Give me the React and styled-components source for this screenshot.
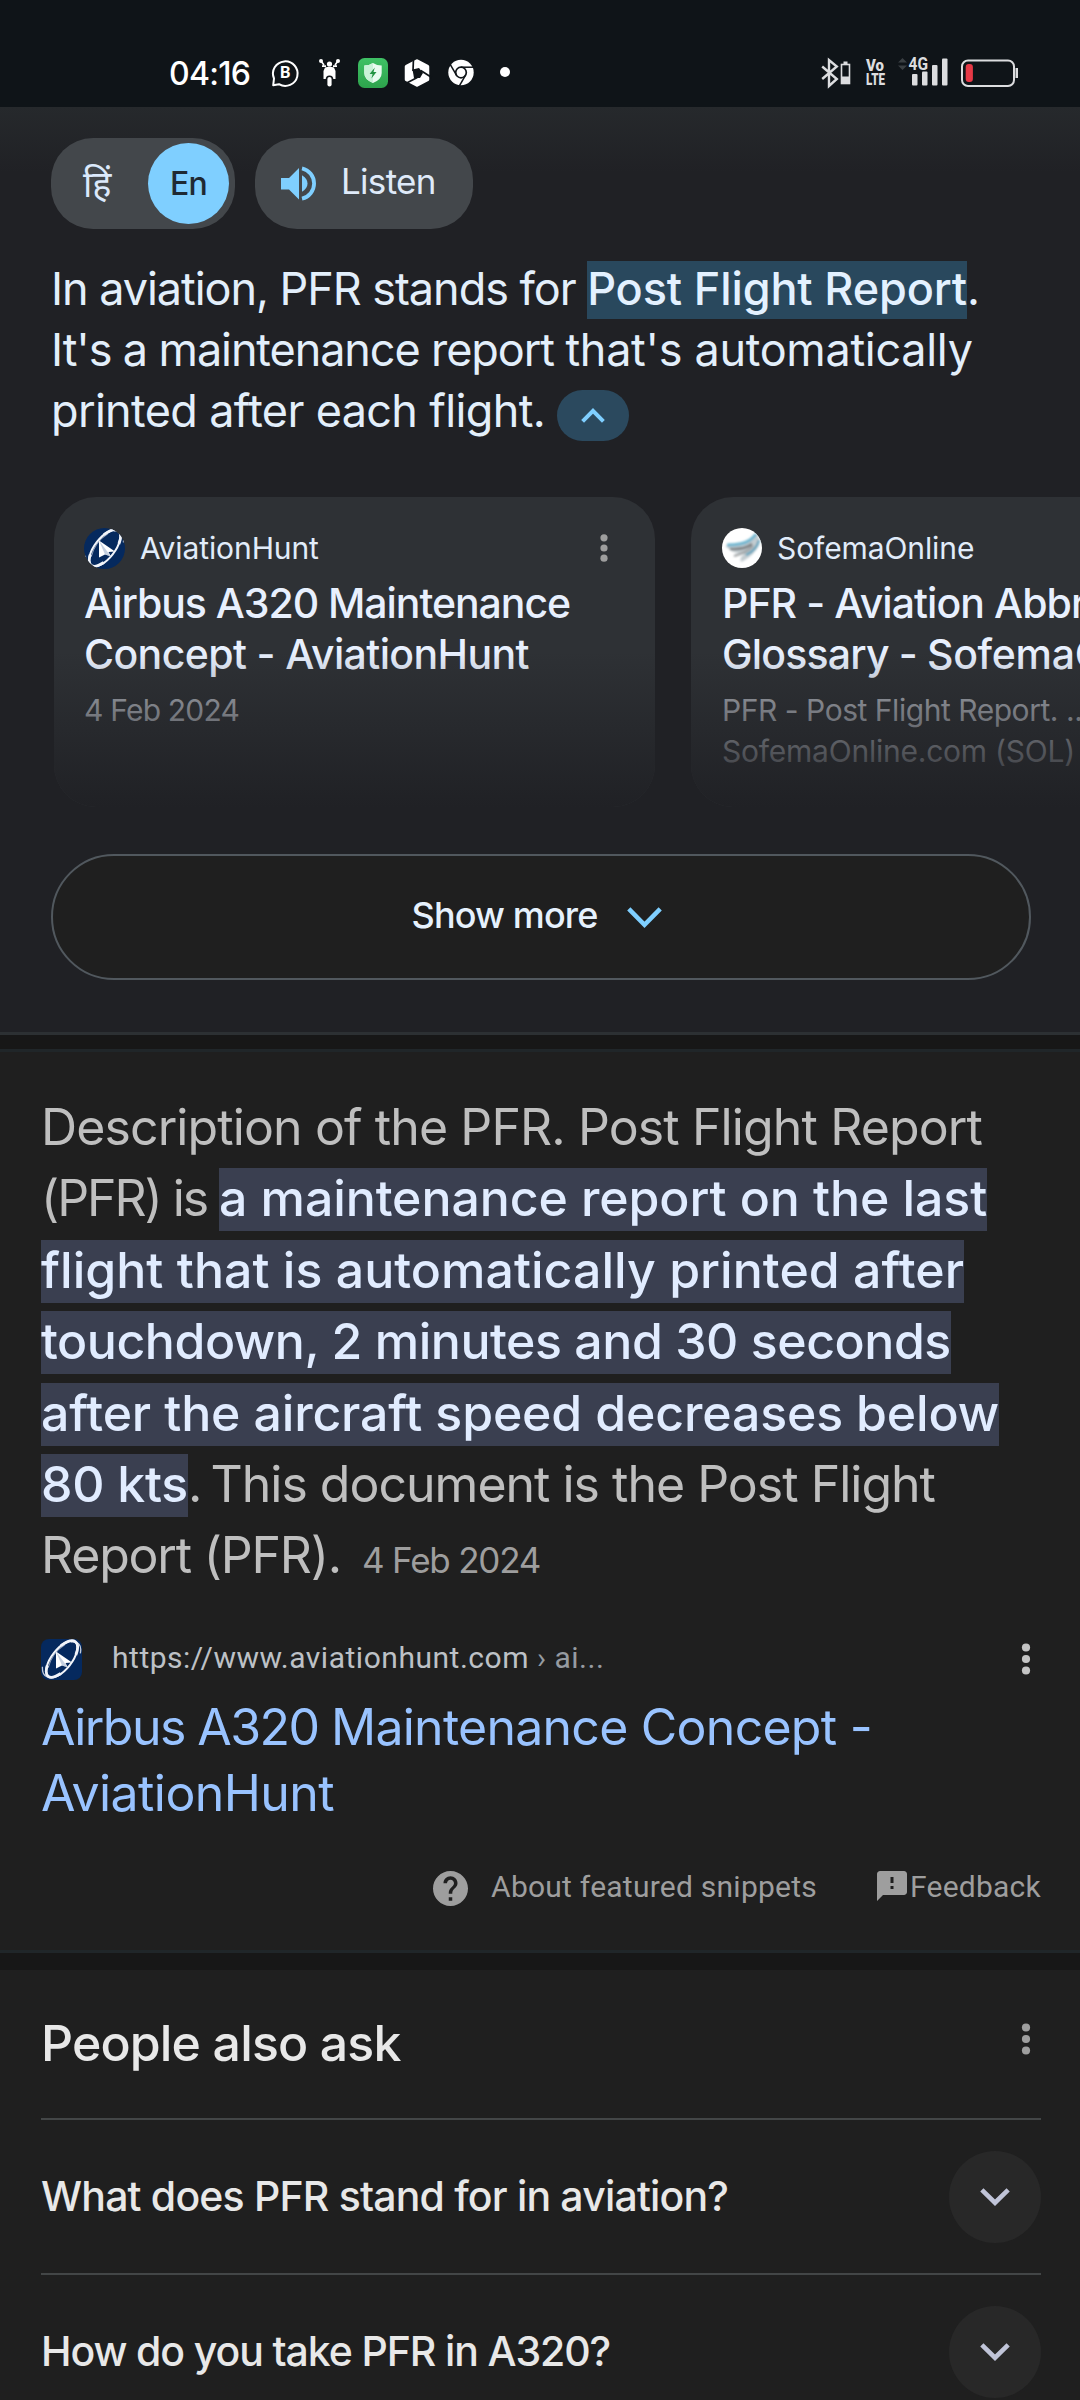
import React from "react";
import styled, { createGlobalStyle } from "styled-components";

const GlobalStyle = createGlobalStyle`
  *, *::before, *::after { box-sizing: border-box; }
  body { margin: 0; background: #1f1f1f; font-family: Inter, "Noto Sans", sans-serif; }
`;

const Screen = styled.div`
  width: 1080px;
  height: 2400px;
  overflow: hidden;
  display: flex;
  flex-direction: column;
  background: #171717;
`;

/* ---------- status bar ---------- */
const StatusBar = styled.header`
  flex: none;
  height: 107px;
  padding: 39px 62px 0 169px;
  display: flex;
  align-items: center;
  background: #0f1418;
`;
const Clock = styled.span`
  width: 82px;
  font-size: 32px;
  font-weight: 500;
  letter-spacing: -0.7px;
  color: #fff;
  white-space: nowrap;
`;
const StatusIcon = styled.svg`
  flex: none;
  display: block;
  overflow: visible;
  height: 30px;
  width: ${(p) => p.$w}px;
  margin-left: ${(p) => p.$gap}px;
`;
const StatusGroup = styled.div`
  display: flex;
  margin-left: auto;
`;

/* ---------- overview ---------- */
const Overview = styled.section`
  flex: none;
  height: 928px;
  padding: 31px 0 0 51px;
  border-bottom: 3px solid #2c3033;
  background: linear-gradient(#26292c 0, #202125 65px, #202125 100%);
`;
const ChipRow = styled.div`
  display: flex;
  gap: 20px;
`;
const Chip = styled.div`
  height: 91px;
  width: ${(p) => p.$w}px;
  padding: ${(p) => p.$pad};
  border-radius: 42px;
  background: #43474b;
  display: flex;
  align-items: center;
`;
const Hindi = styled.span`
  width: 29px;
  font-family: "Noto Sans", sans-serif;
  font-size: 36px;
  line-height: 50px;
  color: #dbe9fb;
  white-space: nowrap;
`;
const Selected = styled.span`
  margin-left: auto;
  width: 81px;
  height: 81px;
  border-radius: 50%;
  background: #7fcfff;
  color: #1f2a33;
  display: flex;
  align-items: center;
  justify-content: center;
  padding-bottom: 1px;
  font-size: 32px;
  font-weight: 500;
  letter-spacing: -0.8px;
`;
const ListenLabel = styled.span`
  margin-left: 25px;
  padding-bottom: 5px;
  font-size: 35px;
  letter-spacing: -0.7px;
  color: #dfeaf9;
`;
const Answer = styled.p`
  margin: 29px 0 0;
  font-size: 45px;
  line-height: 61px;
  color: #e3effb;
`;
const Line = styled.span`
  display: block;
  white-space: pre;
  height: ${(p) => p.$h};
  letter-spacing: ${(p) => p.$ls || 0}px;
`;
const Mark = styled.mark`
  padding-bottom: 3px;
  font-weight: 500;
  letter-spacing: ${(p) => p.$ls || 0}px;
  color: ${(p) => p.$fg};
  background: ${(p) => p.$bg};
`;
const Collapse = styled.span`
  display: inline-flex;
  align-items: center;
  justify-content: center;
  width: 72px;
  height: 51px;
  margin-left: 12px;
  border-radius: 26px;
  vertical-align: 4px;
  background: #2b495e;
`;
const Cards = styled.div`
  margin: 56px 0 0 3px;
  display: flex;
  gap: 36px;
  overflow: hidden;
`;
const Card = styled.article`
  position: relative;
  flex: none;
  width: ${(p) => p.$w}px;
  height: 310px;
  padding: 31px 0 0 ${(p) => p.$pl}px;
  border-radius: ${(p) => p.$r};
  overflow: hidden;
  background: #2e3135;
`;
const Fade = styled.div`
  position: absolute;
  inset: 155px 0 0 0;
  background: linear-gradient(rgba(32, 33, 37, 0), #202125);
`;
const CardHead = styled.div`
  height: 40px;
  padding-right: 45px;
  display: flex;
  align-items: center;
`;
const Source = styled.span`
  margin-left: 15px;
  padding-bottom: 1px;
  font-size: 30px;
  letter-spacing: -0.1px;
  color: #e1ecfa;
`;
const CardTitle = styled.h3`
  margin: 10px 0 0;
  font-size: 41px;
  line-height: 51px;
  font-weight: 500;
  color: #e8f0fe;
`;
const CardText = styled.p`
  margin: 10px 0 0;
  font-size: 30px;
  line-height: 41px;
  color: #b0b4bc;
`;
const Word = styled.span`
  letter-spacing: ${(p) => p.$ls}px;
`;
const Push = styled.span`
  margin-left: auto;
  display: flex;
`;
const ShowMore = styled.button`
  display: flex;
  align-items: center;
  justify-content: center;
  width: 980px;
  height: 126px;
  margin: 47px 0 0;
  padding: 0 8px 5px 0;
  border: 2px solid #51585e;
  border-radius: 63px;
  background: #1f1f1f;
  font-family: inherit;
  font-size: 36px;
  font-weight: 500;
  letter-spacing: -0.85px;
  color: #e6f1fd;
  gap: 30px;
`;

/* ---------- featured snippet ---------- */
const Snippet = styled.section`
  flex: none;
  height: 904px;
  margin-top: 14px;
  padding: 40px 39px 0 41px;
  border-top: 3px solid #202629;
  border-bottom: 3px solid #202629;
  background: #1f1f1f;
`;
const Description = styled.p`
  margin: 0;
  font-size: 50px;
  line-height: 71.4px;
  color: #bfbfbf;
`;
const DateText = styled.span`
  margin-left: 21px;
  font-size: 35px;
  line-height: 1;
  letter-spacing: -1.2px;
  color: #9e9e9e;
`;
const UrlRow = styled.div`
  height: 41px;
  margin-top: 47px;
  padding-right: 9px;
  display: flex;
  align-items: center;
`;
const Url = styled.span`
  margin-left: 30px;
  padding-bottom: 3px;
  font-family: Roboto, sans-serif;
  font-size: 30px;
  letter-spacing: 0.52px;
  white-space: pre;
  color: #bdc1c6;
`;
const Crumb = styled.span`
  color: #969ba1;
`;
const ResultTitle = styled.h2`
  margin: 14px 0 0;
  font-size: 50px;
  line-height: 66px;
  font-weight: 400;
  color: #99c3ff;
`;
const Footer = styled.div`
  height: 37px;
  margin-top: 42px;
  display: flex;
  align-items: center;
  justify-content: flex-end;
  font-family: Roboto, sans-serif;
  font-size: 30px;
  letter-spacing: 0.24px;
  color: #9e9e9e;
`;
const FooterLink = styled.span`
  display: flex;
  align-items: center;
  gap: ${(p) => p.$gap}px;
  margin-left: ${(p) => p.$ml || 0}px;
`;
const Nudge = styled.span`
  display: flex;
  padding-top: ${(p) => p.$top || 0}px;
  padding-bottom: ${(p) => p.$bottom || 0}px;
`;

/* ---------- people also ask ---------- */
const Ask = styled.section`
  flex: none;
  height: 460px;
  margin-top: 17px;
  padding: 43px 39px 0 41px;
  background: #1f1f1f;
`;
const AskHead = styled.div`
  display: flex;
  align-items: center;
  height: 60px;
  margin-bottom: 45px;
  padding-right: 9px;
`;
const AskTitle = styled.h2`
  margin: 0;
  font-size: 50px;
  line-height: 60px;
  font-weight: 500;
  letter-spacing: -0.85px;
  color: #e8e8e8;
`;
const Question = styled.div`
  display: flex;
  align-items: center;
  justify-content: space-between;
  height: 155px;
  border-top: 2px solid #434647;
  font-size: 41px;
  font-weight: 500;
  letter-spacing: ${(p) => p.$ls}px;
  color: #e8e8e8;
`;
const QuestionText = styled.span`
  padding-bottom: 2px;
`;
const Expand = styled.span`
  width: 92px;
  height: 92px;
  border-radius: 50%;
  background: #282828;
  display: flex;
  align-items: center;
  justify-content: center;
`;

const Dots = ({ color, step = 11.5, r = 4.1 }) => (
  <svg width="12" height="34" viewBox="-6 -17 12 34">
    {[-step, 0, step].map((y) => <circle key={y} cy={y} r={r} fill={color} />)}
  </svg>
);

const Chevron = ({ w, h, color, up, sw }) => (
  <svg width={w} height={h} viewBox={`0 0 ${w} ${h}`}>
    <path
      d={up
        ? `M${sw * 0.4} ${h - sw * 0.4}L${w / 2} ${sw * 0.72}L${w - sw * 0.4} ${h - sw * 0.4}`
        : `M${sw * 0.4} ${sw * 0.4}L${w / 2} ${h - sw * 0.72}L${w - sw * 0.4} ${sw * 0.4}`}
      fill="none" stroke={color} strokeWidth={sw}
    />
  </svg>
);

const HuntLogo = ({ round }) => (
  <svg width="41" height="41" viewBox="0 0 41 41">
    <defs>
      <clipPath id={round ? "huntRound" : "huntSquare"}>
        <rect width="41" height="41" rx={round ? 20.5 : 8} />
      </clipPath>
    </defs>
    <g clipPath={`url(#${round ? "huntRound" : "huntSquare"})`}>
      <rect width="41" height="41" fill="#05295e" />
      <g transform="rotate(-52 20.5 20.5)" fill="none" stroke="#f1f4fa">
        <ellipse cx="21" cy="20.5" rx="22" ry="10" strokeWidth="2" />
        <path d="M31 11.500Q43 15 43 20.500T33 29M9 28.500Q-1 25 -1 20.500T7 13" strokeWidth="2.800" />
        <path d="M3 10Q-7 17 2 25M37 31.500Q48 26 40 17" strokeWidth="1.300" opacity=".8" />
        <path d="M6 15Q20 9 34 14" strokeWidth="1" opacity=".6" />
      </g>
      <path d="M15 12.500L31 23.500L24.500 24L27 28.500L21 26.500L15 29.500Z" fill="#fff" />
      <path d="M21 26.500L15 12.500L27 28.500Z" fill="#9fb0cc" opacity=".6" />
    </g>
  </svg>
);

const SofemaLogo = () => (
  <svg width="40" height="40" viewBox="0 0 40 40">
    <defs>
      <clipPath id="sofema"><circle cx="20" cy="20" r="20" /></clipPath>
      <filter id="soft"><feGaussianBlur stdDeviation=".9" /></filter>
    </defs>
    <circle cx="20" cy="20" r="20" fill="#fff" />
    <g clipPath="url(#sofema)">
      <g filter="url(#soft)">
        <path d="M3 18Q20 16 27 12Q33 8 35 5Q40 15 34 22Q28 30 19 34Q17 30 22 26Q12 25 8 22Q6 20 3 18Z" fill="#c3ccd0" />
        <path d="M5 17Q21 17 28 12Q32 9 34 6" fill="none" stroke="#6cb4cf" strokeWidth="3" />
        <path d="M8 21Q22 22 30 16" fill="none" stroke="#6f7377" strokeWidth="2.200" />
        <path d="M37 12Q35 22 24 27" fill="none" stroke="#5a9fba" strokeWidth="2.200" />
        <path d="M12 28Q24 25 31 18" fill="none" stroke="#9a9ea0" strokeWidth="2" />
      </g>
    </g>
  </svg>
);

const Speaker = () => (
  <svg width="35" height="35" viewBox="0 0 35 35" fill="#7fcfff">
    <path d="M0 12V23.500H8L18 33.500V2L8 12Z" />
    <path d="M21 9.300Q26.500 12.500 26.500 17.500T21 25.700Z" />
    <path d="M21 2.300A15.600 15.600 0 0 1 21 32.700" fill="none" stroke="#7fcfff" strokeWidth="3.800" />
  </svg>
);

const dark = "#0f1418";
const grey = "#dcdddf";

const Status = () => (
  <StatusBar>
    <Clock>04:16</Clock>
    <StatusIcon $w={28} $gap={20} viewBox="0 0 28 30">
      <path d="M2.200 27.300L3 20.500A12.300 12.300 0 1 1 8 26.200Z" fill="none" stroke="#fff" strokeWidth="2" strokeLinejoin="round" />
      <text x="14.200" y="20.300" textAnchor="middle" fontFamily="Roboto, sans-serif" fontWeight="700" fontSize="16.500" fill="#fff">B</text>
    </StatusIcon>
    <StatusIcon $w={21} $gap={20} viewBox="0 0 21 30">
      <g fill="#fff">
        <circle cx="2" cy="3" r="2" /><circle cx="19" cy="3" r="2" /><circle cx="10.500" cy="6" r="2.600" />
        <path d="M2 3L5 7M19 3L16 7M3 8.200H7M14 8.200H18" stroke="#fff" strokeWidth="1.700" />
        <path d="M6 9.500Q10.500 8 15 9.500L16.500 13V21H4.500V13Z" />
        <rect x="6.700" y="17.500" width="7.600" height="12" rx="3.800" fill={dark} />
        <rect x="8.400" y="19" width="4.200" height="9.500" rx="2.100" />
      </g>
    </StatusIcon>
    <StatusIcon $w={30} $gap={18} viewBox="0 0 30 30">
      <defs>
        <linearGradient id="leaf" x2="0" y2="1"><stop stopColor="#3fc165" /><stop offset="1" stopColor="#2da34c" /></linearGradient>
      </defs>
      <rect width="30" height="30" rx="6.500" fill="url(#leaf)" />
      <path d="M15 5Q19 7.500 23.700 7.500V15Q23.700 21.500 15 25Q6.300 21.500 6.300 15V7.500Q11 7.500 15 5Z" fill="#e9fbf0" />
      <path d="M15 5Q11 7.500 6.300 7.500V15Q6.300 21.500 15 25Z" fill="#c9f2d8" />
      <path d="M16.800 9.500L11.600 16H14.600L13.400 20.500L18.500 14H15.500Z" fill="#239443" />
    </StatusIcon>
    <StatusIcon $w={26} $gap={16} viewBox="-13 -15 26 30">
      <path d="M0 -12L10.500 -6.500V6.500L0 12L-10.500 6.500V-6.500Z" fill="#fff" stroke="#fff" strokeWidth="3.500" strokeLinejoin="round" />
      <path d="M-4.500 -3.500L2 -5L6 0L3 5L-3 5Z" fill={dark} />
      {[0, 120, 240].map((a) => <path key={a} transform={`rotate(${a})`} d="M-3.500 -15L-4 -2" stroke={dark} strokeWidth="1.700" />)}
    </StatusIcon>
    <StatusIcon $w={26} $gap={18} viewBox="-13 -15 26 30">
      <circle r="12.700" cy="-.5" fill="#fff" />
      <g transform="translate(0 -.5)">
        <circle r="5.300" fill="none" stroke={dark} strokeWidth="1.700" />
        {[0, 120, 240].map((a) => <path key={a} transform={`rotate(${a})`} d="M0 -5.300H13" stroke={dark} strokeWidth="1.500" />)}
      </g>
    </StatusIcon>
    <StatusIcon $w={10} $gap={26} viewBox="0 0 10 30"><circle cx="5" cy="14" r="5" fill="#fff" /></StatusIcon>

    <StatusGroup>
      <StatusIcon $w={29} $gap={0} viewBox="0 0 29 30">
        <path d="M1.200 8.500L15.800 21L8 28V2L15.800 8.500L1.200 21" fill="none" stroke={grey} strokeWidth="2.400" />
        <rect x="20.500" y="6.500" width="8" height="19" fill="none" stroke={grey} strokeWidth="1.600" />
        <rect x="22.500" y="3.500" width="4" height="3" fill={grey} />
        <rect x="20.500" y="18.500" width="8" height="7" fill={grey} />
      </StatusIcon>
      <StatusIcon $w={19} $gap={16} viewBox="0 0 19 30">
        <g fontFamily="Roboto, sans-serif" fontWeight="900" fontSize="16.500" fill={grey}>
          <text x="0" y="13" textLength="18" lengthAdjust="spacingAndGlyphs">Vo</text>
          <text x="0" y="27.300" textLength="19" lengthAdjust="spacingAndGlyphs">LTE</text>
        </g>
      </StatusIcon>
      <StatusIcon $w={50} $gap={13} viewBox="0 0 50 30">
        <path d="M0 4.500L4.500 0L9 4.500ZM0 7.500L4.500 12L9 7.500Z" fill="#3a3f42" />
        <g fill={grey}>
          <rect x="14" y="16" width="5.500" height="11.500" rx="1" />
          <rect x="24" y="13.500" width="5.500" height="14" rx="1" />
          <rect x="34" y="7" width="5.500" height="20.500" rx="1" />
          <rect x="44" y=".5" width="5.500" height="27" rx="1" />
        </g>
        <text x="10.500" y="12.300" textLength="19.500" lengthAdjust="spacingAndGlyphs" fontFamily="Roboto, sans-serif" fontWeight="700" fontSize="18" fill={grey}>4G</text>
      </StatusIcon>
      <StatusIcon $w={57} $gap={13} viewBox="0 0 57 30">
        <rect x="1" y="2.500" width="52" height="25.500" rx="6" fill="none" stroke={grey} strokeWidth="2" />
        <rect x="4.700" y="6" width="7.200" height="18" rx="3" fill="#e63946" />
        <rect x="54.500" y="10" width="2.500" height="10" fill={grey} />
      </StatusIcon>
    </StatusGroup>
  </StatusBar>
);

const snippetMark = { $bg: "#3a3f50", $fg: "#e1ecff" };

export default function App() {
  return (
    <Screen>
      <GlobalStyle />
      <Status />
      <Overview>
        <ChipRow>
          <Chip $w={184} $pad="0 6px 0 32px">
            <Hindi>हिं</Hindi>
            <Selected>En</Selected>
          </Chip>
          <Chip $w={218} $pad="0 0 0 26px">
            <Speaker />
            <ListenLabel>Listen</ListenLabel>
          </Chip>
        </ChipRow>
        <Answer>
          <Line $h="61px" $ls={-1.05}>
            In aviation, PFR stands for <Mark $ls={-0.13} $bg="#29485d" $fg="#e3f1ff">Post Flight Report</Mark>.
          </Line>
          <Line $h="61px" $ls={-0.75}><Word $ls={-1.1}>It's a maintenance report </Word><Word $ls={-0.31}>that's automatically</Word></Line>
          <Line $h="61px" $ls={-0.66}>
            printed after each flight.<Collapse><Chevron up w={24} h={15} sw={4} color="#7fcfff" /></Collapse>
          </Line>
        </Answer>
        <Cards>
          <Card $w={601} $pl={30} $r="42px">
            <CardHead>
              <HuntLogo round />
              <Source>AviationHunt</Source>
              <Push><Dots color="#9e9e9e" step={10.2} r={3.6} /></Push>
            </CardHead>
            <CardTitle>
              <Line $ls={-1.05}>Airbus A320 Maintenance</Line>
              <Line $ls={-0.61}>Concept - AviationHunt</Line>
            </CardTitle>
            <CardText><Line $ls={-0.8}>4 Feb 2024</Line></CardText>
            <Fade />
          </Card>
          <Card $w={389} $pl={31} $r="42px 0 0 42px">
            <CardHead>
              <SofemaLogo />
              <Source>SofemaOnline</Source>
            </CardHead>
            <CardTitle>
              <Line $ls={-0.93}>PFR - Aviation Abbreviations</Line>
              <Line $ls={-0.83}>Glossary - <Word $ls={-0.3}>SofemaOnline</Word></Line>
            </CardTitle>
            <CardText>
              <Line $ls={-0.46}>PFR - Post Flight Report. ...</Line>
              <Line $ls={-0.23}>SofemaOnline.com (SOL)</Line>
            </CardText>
            <Fade />
          </Card>
        </Cards>
        <ShowMore>
          Show more
          <Nudge $top={5}><Chevron w={35} h={21} sw={4.5} color="#7fcfff" /></Nudge>
        </ShowMore>
      </Overview>

      <Snippet>
        <Description>
          <Line $ls={-0.89}>Description of the PFR. Post Flight Report</Line>
          <Line $ls={-2.08}>(PFR) is <Mark {...snippetMark} $ls={-0.09}>a maintenance report on the last</Mark></Line>
          <Line><Mark {...snippetMark} $ls={0.03}>flight that is automatically printed after</Mark></Line>
          <Line><Mark {...snippetMark} $ls={-0.46}>touchdown, 2 minutes and 30 seconds</Mark></Line>
          <Line><Mark {...snippetMark} $ls={-0.15}>after the aircraft speed decreases below</Mark></Line>
          <Line $ls={-1}><Mark {...snippetMark} $ls={-0.26}>80 kts</Mark><Word $ls={-3}>. </Word>This document is the Post Flight</Line>
          <Line $ls={-1.21}>Report (PFR).<DateText>4 Feb 2024</DateText></Line>
        </Description>
        <UrlRow>
          <HuntLogo />
          <Url>https://www.aviationhunt.com<Crumb> › ai...</Crumb></Url>
          <Push><Dots color="#c4c4c4" /></Push>
        </UrlRow>
        <ResultTitle>
          <Line $ls={-0.75}><Word $ls={-1.55}>Airbus A320 </Word>Maintenance Concept -</Line>
          <Line $ls={-0.58}>AviationHunt</Line>
        </ResultTitle>
        <Footer>
          <FooterLink $gap={23}>
            <Nudge $top={4}>
              <svg width="35" height="35" viewBox="2 2 20 20" fill="#9e9e9e">
                <path d="M12 2C6.480 2 2 6.480 2 12s4.480 10 10 10 10-4.480 10-10S17.520 2 12 2zm1 17h-2v-2h2v2zm2.070-7.750l-.9.920C13.450 12.900 13 13.500 13 15h-2v-.5c0-1.100.45-2.100 1.170-2.830l1.240-1.260c.370-.360.590-.860.590-1.410 0-1.100-.9-2-2-2s-2 .9-2 2H8c0-2.210 1.790-4 4-4s4 1.790 4 4c0 .88-.360 1.680-.930 2.250z" />
              </svg>
            </Nudge>
            About featured snippets
          </FooterLink>
          <FooterLink $gap={3} $ml={60}>
            <svg width="30" height="30" viewBox="2 2 20 20" fill="#9e9e9e">
              <path d="M20 2H4c-1.100 0-1.990.9-1.990 2L2 22l4-4h14c1.100 0 2-.9 2-2V4c0-1.100-.9-2-2-2zm-7 12h-2v-2h2v2zm0-4h-2V6h2v4z" />
            </svg>
            Feedback
          </FooterLink>
        </Footer>
      </Snippet>

      <Ask>
        <AskHead>
          <AskTitle>People also ask</AskTitle>
          <Push><Nudge $bottom={8}><Dots color="#9e9e9e" /></Nudge></Push>
        </AskHead>
        <Question $ls={-0.82}>
          <QuestionText>What does PFR stand for in aviation?</QuestionText>
          <Expand><Chevron w={30} h={18} sw={4.6} color="#c0c4d8" /></Expand>
        </Question>
        <Question $ls={-1.11}>
          <QuestionText>How do you take PFR in A320?</QuestionText>
          <Expand><Chevron w={30} h={18} sw={4.6} color="#c0c4d8" /></Expand>
        </Question>
      </Ask>
    </Screen>
  );
}
